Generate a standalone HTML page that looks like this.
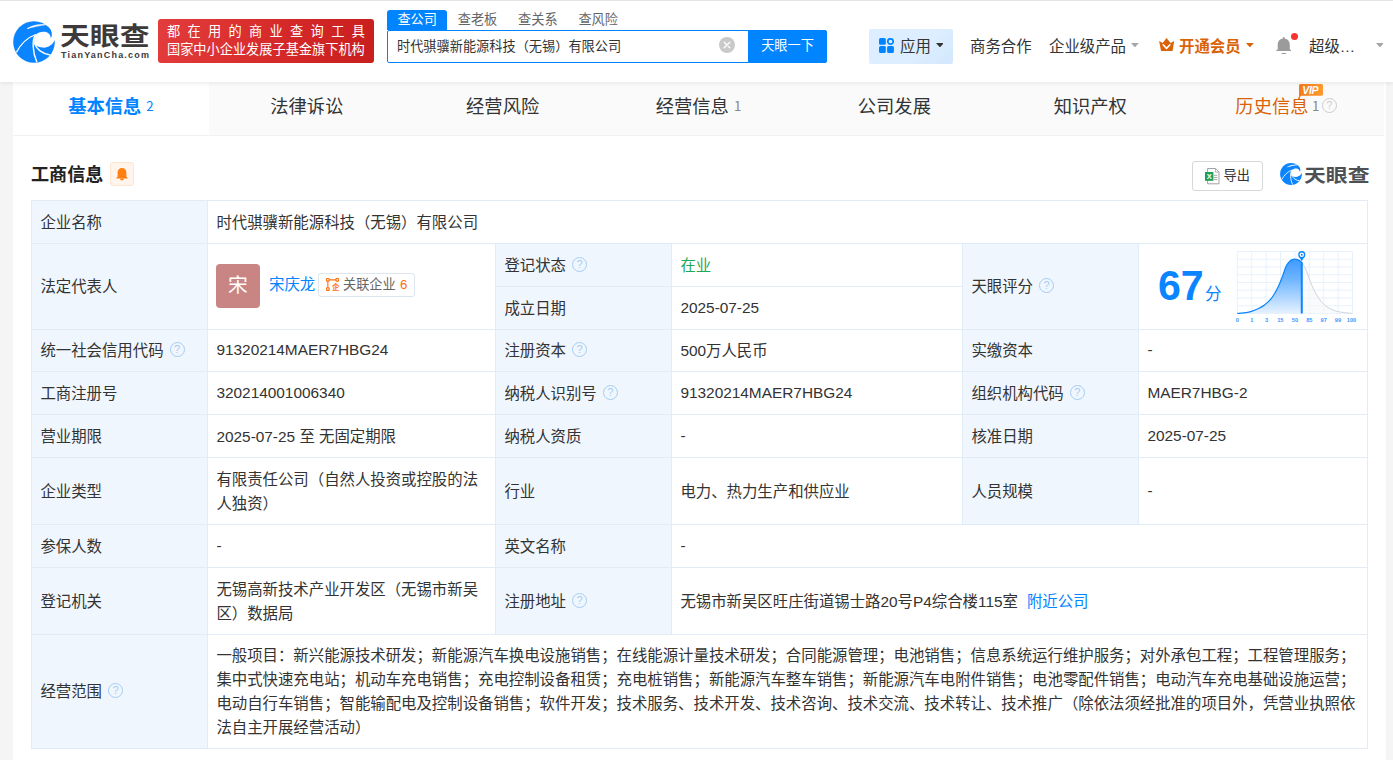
<!DOCTYPE html>
<html lang="zh-CN">
<head>
<meta charset="utf-8">
<title>天眼查</title>
<style>
*{box-sizing:border-box;margin:0;padding:0}
html,body{width:1393px;height:760px;overflow:hidden}
body{background:#f5f5f5;font-family:"Liberation Sans","Noto Sans CJK SC",sans-serif;font-size:15px;color:#333;position:relative}
a{text-decoration:none;color:#0084ff}
.abs{position:absolute;white-space:nowrap}
/* header */
#hd{position:absolute;left:0;top:0;width:1393px;height:82px;background:#fff;box-shadow:0 1px 5px rgba(0,0,0,.09);z-index:5}
#hd:before{content:'';position:absolute;left:0;top:0;width:100%;height:1px;background:#e2e4e2}
#logo-t{left:60px;top:18px;font-size:25.5px;line-height:36px;font-weight:bold;color:#3e3a39;transform-origin:0 50%;transform:scaleX(1.17);letter-spacing:0}
#logo-e{left:61px;top:49px;font-size:9px;line-height:12px;font-weight:bold;color:#3e3a39;letter-spacing:1.2px}
#ban{left:158px;top:19px;width:216px;height:44px;border-radius:3px;background:linear-gradient(100deg,#e33c3c 0%,#d62a2a 55%,#c91e1e 100%);color:#fff;font-size:13.2px}
#ban div{position:absolute;left:9px;white-space:nowrap;line-height:18px}
#st{left:387px;top:10px;height:20px;font-size:13.2px;line-height:19px;color:#666}
#st span{display:inline-block;padding:0 10.4px;height:20px}
#st span.on{background:#0084ff;color:#fff;border-radius:3px 3px 0 0}
#sb{left:387px;top:30px;width:440px;height:33px;border:1.5px solid #0084ff;border-radius:2px;background:#fff}
#sbt{left:397px;top:30px;line-height:33px;font-size:13.2px;color:#333}
#sbb{left:748px;top:30px;width:79px;height:33px;background:#0084ff;color:#fff;font-size:13.2px;line-height:32px;text-align:center;border-radius:0 3px 3px 0}
#clr{left:719px;top:37px;width:16px;height:16px}
#app{left:869px;top:29px;width:84px;height:35px;background:linear-gradient(135deg,#dceeff 0%,#dceeff 60%,#d3e8fd 100%);border-radius:2px}
.nav{font-size:15.4px;line-height:20px;top:37px;color:#333}
.car{width:0;height:0;border-left:3.8px solid transparent;border-right:3.8px solid transparent;border-top:4.2px solid #a3a6aa}

/* card */
#card{position:absolute;left:13px;top:82px;width:1373px;height:690px;background:#fff}
#tabs{position:absolute;left:0;top:0;width:1371px;height:54px;background:#fafafa;border-bottom:1px solid #f2f2f2}
.tab{position:absolute;top:0;width:195.86px;height:54px;line-height:50px;font-size:18.3px;color:#333;text-align:center;white-space:nowrap}
.tab.on{background:#fff;color:#0084ff;font-weight:bold;height:53px}
.tab small{font-family:"Noto Sans CJK SC",sans-serif;font-size:13.2px;color:#888;font-weight:normal;margin-left:5px;position:relative;top:-2px}
.tab.on small{color:#0084ff}
#sec{left:18px;top:80px;font-size:18.1px;line-height:26px;font-weight:bold;color:#222}
#bell{left:97px;top:80px;width:24px;height:24px;background:#fff5ec;border:1px solid #ffe6cf;border-radius:3px}
#exp{left:1179px;top:79px;width:71px;height:30px;border:1px solid #d8d8d8;border-radius:3px;background:#fff;font-size:13.2px;line-height:27px;color:#333}
#wm{left:1291px;top:81px;font-size:18.6px;line-height:26px;font-weight:bold;color:#4d5156;transform-origin:0 50%;transform:scaleX(1.175)}
/* table */
#tb{position:absolute;left:18px;top:118px;width:1337px;height:549px;border-right:1px solid #e1ecf6;border-bottom:1px solid #e1ecf6;font-size:15.4px;color:#333}
.c{position:absolute;border-left:1px solid #e1ecf6;border-top:1px solid #e1ecf6;padding:1px 0 0 8.4px;display:flex;align-items:center;line-height:23.9px}
.c.l{background:#f0f6fd}
.c>div{white-space:nowrap}
.n{position:relative;top:-1px}
.q{display:inline-block;width:15px;height:15px;border:1.2px solid #a6cdf2;border-radius:50%;color:#a6cdf2;font-size:11px;line-height:12.6px;text-align:center;vertical-align:3px;margin-left:6px;font-family:"Liberation Sans",sans-serif}
</style>
</head>
<body>
<div id="hd">
  <svg class="abs" style="left:13px;top:20.5px" width="42" height="42" viewBox="0 0 42 42">
    <circle cx="21" cy="21" r="20.8" fill="#0a84ff"/>
    <path d="M22.4,13.9 C25.2,11.2 29.5,10 33.2,11 C36.2,11.9 37.9,14.5 37.7,17.1 C38.9,15.5 39.5,12.4 37.8,8.8 L43,8 L43,19.3 L41.7,19.3 C39.6,24 34.5,27.2 29.6,26.6 C27.3,26.3 25.3,25.6 23.8,25.2 C22.2,23.6 21.4,22.6 21.2,21.6 C20.9,18.6 21.4,15.8 22.4,13.9 Z" fill="#fff"/>
    <path d="M22.8,13.5 C14.5,16.5 7.5,23.5 3.4,31.4" fill="none" stroke="#fff" stroke-width="1.3"/>
    <path d="M22.4,13.9 C19,19 19.4,31 23.9,41.2" fill="none" stroke="#fff" stroke-width="1.4"/>
    <path d="M21.3,21.6 C23,28 29.5,33 37.4,34" fill="none" stroke="#fff" stroke-width="1.4"/>
    <path d="M14,7.7 C19.5,4.2 27,2.9 32.6,3.8 C27,4.4 20,6 14,7.7 Z" fill="#fff" stroke="#fff" stroke-width=".6"/>
  </svg>
  <div class="abs" id="logo-t">天眼查</div>
  <div class="abs" id="logo-e">TianYanCha.com</div>
  <div class="abs" id="ban"><div style="top:4px;letter-spacing:7.33px">都在用的商业查询工具</div><div style="top:22px;letter-spacing:0">国家中小企业发展子基金旗下机构</div></div>
  <div class="abs" id="st"><span class="on">查公司</span><span>查老板</span><span>查关系</span><span>查风险</span></div>
  <div class="abs" id="sb"></div>
  <div class="abs" id="sbt">时代骐骥新能源科技（无锡）有限公司</div>
  <svg class="abs" id="clr" viewBox="0 0 16 16"><circle cx="8" cy="8" r="8" fill="#c9c9c9"/><path d="M5.2,5.2 L10.8,10.8 M10.8,5.2 L5.2,10.8" stroke="#fff" stroke-width="1.3" stroke-linecap="round"/></svg>
  <div class="abs" id="sbb">天眼一下</div>
  <div class="abs" id="app"></div>
  <svg class="abs" style="left:879px;top:38px" width="15" height="15" viewBox="0 0 15 15"><rect x="0" y="0" width="6.8" height="6.8" rx="1.5" fill="#0084ff"/><rect x="0" y="8.1" width="6.8" height="6.8" rx="1.5" fill="#0084ff"/><rect x="8.1" y="8.1" width="6.8" height="6.8" rx="1.5" fill="#0084ff"/><circle cx="11.5" cy="3.5" r="2.7" fill="none" stroke="#0084ff" stroke-width="1.7"/></svg>
  <div class="abs nav" style="left:900px">应用</div>
  <svg class="abs" style="left:935.5px;top:43px" width="7.8" height="4.4" viewBox="0 0 7.8 4.4"><path d="M0,0 L7.8,0 L3.9,4.4 Z" fill="#333"/></svg>
  <div class="abs nav" style="left:970px">商务合作</div>
  <div class="abs nav" style="left:1049px">企业级产品</div>
  <svg class="abs" style="left:1131.2px;top:43px" width="7.8" height="4.4" viewBox="0 0 7.8 4.4"><path d="M0,0 L7.8,0 L3.9,4.4 Z" fill="#a3a6aa"/></svg>
  <svg class="abs" style="left:1159px;top:38px" width="15.3" height="13.3" viewBox="0 0 15.3 13.3"><path d="M0.1,3 L3.6,5 L7.55,0 L11.6,5 L15.2,3 L13.5,13.2 L2.1,13.2 Z" fill="#db6307"/><path d="M4.2,6.8 L7.55,10.4 L10.9,6.8" fill="none" stroke="#fff" stroke-width="1.6" stroke-linecap="round" stroke-linejoin="round"/></svg>
  <div class="abs nav" style="left:1179px;color:#db6307;font-weight:bold">开通会员</div>
  <svg class="abs" style="left:1245.8px;top:43px" width="7.8" height="4.4" viewBox="0 0 7.8 4.4"><path d="M0,0 L7.8,0 L3.9,4.4 Z" fill="#db6307"/></svg>
  <svg class="abs" style="left:1275.5px;top:37px" width="15.5" height="17.5" viewBox="0 0 15.5 17.5"><path d="M7.75,0 C8.3,0 8.6,0.4 8.6,1.6 C11.8,2 13.8,4.6 13.8,8 L13.8,12.6 L15.4,13.4 L15.4,14.1 L0.1,14.1 L0.1,13.4 L1.7,12.6 L1.7,8 C1.7,4.6 3.7,2 6.9,1.6 C6.9,0.4 7.2,0 7.75,0 Z" fill="#9b9b9b"/><rect x="5.4" y="16.1" width="4.7" height="1" rx=".5" fill="#9b9b9b"/></svg>
  <div class="abs" style="left:1291px;top:33px;width:7px;height:7px;border-radius:50%;background:#f5342f"></div>
  <div class="abs nav" style="left:1309px">超级…</div>
  <svg class="abs" style="left:1375.6px;top:42.5px" width="7.8" height="4.4" viewBox="0 0 7.8 4.4"><path d="M0,0 L7.8,0 L3.9,4.4 Z" fill="#a3a6aa"/></svg>
</div>

<div id="card">
  <div id="tabs">
    <div class="tab on" style="left:0.00px">基本信息<small>2</small></div>
    <div class="tab" style="left:195.86px">法律诉讼</div>
    <div class="tab" style="left:391.72px">经营风险</div>
    <div class="tab" style="left:587.58px">经营信息<small>1</small></div>
    <div class="tab" style="left:783.44px">公司发展</div>
    <div class="tab" style="left:979.30px">知识产权</div>
    <div class="tab" style="left:1175.16px;color:#db6307">历史信息<small style="margin-left:3.5px">1</small><span class="q" style="border-color:#ccc;color:#ccc;margin-left:2.5px;vertical-align:4px">?</span></div>
    <svg class="abs" style="left:1286px;top:2px" width="24" height="14" viewBox="0 0 24 14"><defs><linearGradient id="vg" x1="0" y1="0" x2="1" y2="0"><stop offset="0" stop-color="#f47a18"/><stop offset="1" stop-color="#ff9b30"/></linearGradient></defs><path d="M1.5,0 L22.5,0 Q24,0 24,1.5 L24,10.3 Q24,11.8 22.5,11.8 L2.4,11.8 L0,13.6 L0,1.5 Q0,0 1.5,0 Z" fill="url(#vg)"/><text x="3.2" y="9.8" font-family="Liberation Sans,sans-serif" font-size="10.5" font-weight="bold" font-style="italic" fill="#fff" letter-spacing="-0.3">VIP</text></svg>
  </div>
  <div class="abs" id="sec">工商信息</div>
  <div class="abs" id="bell"><svg style="position:absolute;left:5px;top:5px" width="12" height="13" viewBox="0 0 12 13"><path d="M6,0 C8.6,0 10.4,2 10.4,4.8 L10.4,8.6 L11.6,9.8 L11.6,10.6 L0.4,10.6 L0.4,9.8 L1.6,8.6 L1.6,4.8 C1.6,2 3.4,0 6,0 Z" fill="#ff8010"/><path d="M4,10.6 L8,10.6 C8,11.8 7.1,12.6 6,12.6 C4.9,12.6 4,11.8 4,10.6 Z" fill="#ff8010"/></svg></div>
  <div class="abs" id="exp"><svg style="position:absolute;left:11.5px;top:6px" width="15" height="16.5" viewBox="0 0 15 16.5"><path d="M2.6,0.5 L10.6,0.5 L14,3.9 L14,15.8 L2.6,15.8 Z" fill="#fff" stroke="#a2a2a2" stroke-width="1"/><path d="M10.4,0.6 L10.4,4.1 L13.9,4.1" fill="none" stroke="#a2a2a2" stroke-width=".8"/><path d="M9,7.3 L12.4,7.3 M9,9.5 L12.4,9.5 M9,11.7 L12.4,11.7" stroke="#a2a2a2" stroke-width=".9"/><rect x="0" y="4" width="8.4" height="8.8" fill="#1e9f55"/><text x="4.2" y="11" text-anchor="middle" font-family="Liberation Sans,sans-serif" font-size="7.6" font-weight="bold" fill="#fff">X</text></svg><span style="margin-left:30.5px">导出</span></div>
  <svg class="abs" style="left:1267px;top:81px" width="22" height="22" viewBox="0 0 42 42">
    <circle cx="21" cy="21" r="20.8" fill="#0a84ff"/>
    <path d="M22.4,13.9 C25.2,11.2 29.5,10 33.2,11 C36.2,11.9 37.9,14.5 37.7,17.1 C38.9,15.5 39.5,12.4 37.8,8.8 L43,8 L43,19.3 L41.7,19.3 C39.6,24 34.5,27.2 29.6,26.6 C27.3,26.3 25.3,25.6 23.8,25.2 C22.2,23.6 21.4,22.6 21.2,21.6 C20.9,18.6 21.4,15.8 22.4,13.9 Z" fill="#fff"/>
    <path d="M22.8,13.5 C14.5,16.5 7.5,23.5 3.4,31.4" fill="none" stroke="#fff" stroke-width="1.6"/>
    <path d="M22.4,13.9 C19,19 19.4,31 23.9,41.2" fill="none" stroke="#fff" stroke-width="1.7"/>
    <path d="M21.3,21.6 C23,28 29.5,33 37.4,34" fill="none" stroke="#fff" stroke-width="1.7"/>
    <path d="M14,7.7 C19.5,4.2 27,2.9 32.6,3.8 C27,4.4 20,6 14,7.7 Z" fill="#fff" stroke="#fff" stroke-width=".6"/>
  </svg>
  <div class="abs" id="wm">天眼查</div>
  <div id="tb">
    <div class="c l" style="left:0px;top:0px;width:176px;height:43px"><div>企业名称</div></div>
    <div class="c" style="left:176px;top:0px;width:1160px;height:43px"><div>时代骐骥新能源科技（无锡）有限公司</div></div>
    <div class="c l" style="left:0px;top:43px;width:176px;height:86px"><div>法定代表人</div></div>
    <div class="c" style="left:176px;top:43px;width:288px;height:86px"><div><span class="abs" style="left:8px;top:20px;width:44px;height:44px;border-radius:4px;background:#c98584;color:#fff;font-size:19.8px;line-height:42px;text-align:center">宋</span><a class="abs" style="left:61px;top:29px;line-height:24px">宋庆龙</a><span class="abs" style="left:110px;top:29px;width:97px;height:24px;border:1px solid #dde5ee;border-radius:3px"></span><svg class="abs" style="left:118px;top:34px" width="13.2" height="13" viewBox="0 0 13.2 13"><g fill="none" stroke="#ff6d0a" stroke-width="1.1"><rect x=".55" y=".55" width="2.6" height="2.6" rx=".5"/><rect x="10" y=".55" width="2.6" height="2.6" rx=".5"/><rect x=".55" y="9.8" width="2.6" height="2.6" rx=".5"/><path d="M3.2,1.85 L10,1.85 M1.85,3.2 L1.85,9.8"/></g><text x="9.7" y="12.4" text-anchor="middle" font-family="Noto Sans CJK SC,sans-serif" font-size="7.6" font-weight="bold" fill="#ff6d0a">企</text></svg><span class="abs" style="left:135px;top:29px;line-height:24px;font-size:13.2px;color:#666">关联企业</span><span class="abs" style="left:192px;top:29px;line-height:24px;font-size:13.2px;color:#ff6d0a">6</span></div></div>
    <div class="c l" style="left:464px;top:43px;width:176px;height:43px"><div>登记状态<span class="q">?</span></div></div>
    <div class="c" style="left:640px;top:43px;width:291px;height:43px"><div><span style="color:#1fa755">在业</span></div></div>
    <div class="c l" style="left:464px;top:86px;width:176px;height:43px"><div>成立日期</div></div>
    <div class="c" style="left:640px;top:86px;width:291px;height:43px"><div><span class="n">2025-07-25</span></div></div>
    <div class="c l" style="left:931px;top:43px;width:176px;height:86px"><div>天眼评分<span class="q">?</span></div></div>
    <div class="c" style="left:1107px;top:43px;width:229px;height:86px"><div><span class="abs" style="left:19px;top:19px;font-size:43px;line-height:44px;font-weight:bold;color:#0a84ff;font-family:'Liberation Sans',sans-serif;transform-origin:0 50%;transform:scaleX(.955)">67</span><span class="abs" style="left:66px;top:39px;font-size:16.5px;line-height:22px;color:#0a84ff">分</span><svg class="abs" style="left:91px;top:2px" width="132" height="82" viewBox="0 0 132 82"><defs><linearGradient id="cg" x1="0" y1="0" x2="0" y2="1"><stop offset="0" stop-color="#3d9bff"/><stop offset=".35" stop-color="#6cb3ff"/><stop offset="1" stop-color="#e6f2ff"/></linearGradient></defs><path d="M7.34,5.40 L7.34,67.46 M21.74,5.40 L21.74,67.46 M36.14,5.40 L36.14,67.46 M50.53,5.40 L50.53,67.46 M64.93,5.40 L64.93,67.46 M79.33,5.40 L79.33,67.46 M93.73,5.40 L93.73,67.46 M108.13,5.40 L108.13,67.46 M122.53,5.40 L122.53,67.46 M7.34,5.40 L122.50,5.40 M7.34,13.16 L122.50,13.16 M7.34,20.92 L122.50,20.92 M7.34,28.68 L122.50,28.68 M7.34,36.44 L122.50,36.44 M7.34,44.20 L122.50,44.20 M7.34,51.96 L122.50,51.96 M7.34,59.72 L122.50,59.72 M7.34,67.48 L122.50,67.48" fill="none" stroke="#e7f1fc" stroke-width="1"/><path d="M71.78,16.41 C72.41,17.49 74.38,20.40 75.55,22.88 C76.72,25.36 77.71,28.49 78.79,31.30 C79.87,34.11 80.77,36.84 82.03,39.72 C83.29,42.60 84.73,45.84 86.35,48.57 C87.97,51.30 89.94,54.06 91.74,56.13 C93.54,58.19 95.16,59.63 97.14,60.98 C99.12,62.33 101.46,63.37 103.62,64.22 C105.77,65.07 106.94,65.52 110.09,66.06 C113.24,66.59 120.44,67.22 122.50,67.46 L122.50,67.46 L71.78,67.46 Z" fill="#f7f8fa" fill-opacity=".75"/><path d="M71.78,16.41 C72.41,17.49 74.38,20.40 75.55,22.88 C76.72,25.36 77.71,28.49 78.79,31.30 C79.87,34.11 80.77,36.84 82.03,39.72 C83.29,42.60 84.73,45.84 86.35,48.57 C87.97,51.30 89.94,54.06 91.74,56.13 C93.54,58.19 95.16,59.63 97.14,60.98 C99.12,62.33 101.46,63.37 103.62,64.22 C105.77,65.07 106.94,65.52 110.09,66.06 C113.24,66.59 120.44,67.22 122.50,67.46" fill="none" stroke="#c9cfd9" stroke-width=".9"/><path d="M7.34,67.46 C8.81,67.33 13.82,67.04 16.19,66.70 C18.56,66.36 19.61,66.06 21.59,65.41 C23.57,64.76 25.90,63.90 28.06,62.82 C30.22,61.74 32.38,60.59 34.54,58.93 C36.70,57.28 39.22,54.97 41.01,52.89 C42.81,50.80 44.07,48.57 45.33,46.41 C46.59,44.25 47.58,42.09 48.57,39.94 C49.56,37.78 50.42,35.62 51.27,33.46 C52.11,31.30 52.83,29.18 53.64,26.98 C54.45,24.79 55.21,22.14 56.13,20.29 C57.04,18.44 58.10,16.98 59.15,15.87 C60.19,14.75 61.45,14.05 62.39,13.60 C63.32,13.15 63.91,13.17 64.76,13.17 C65.61,13.17 66.56,13.28 67.46,13.60 C68.36,13.92 69.44,14.64 70.16,15.11 C70.88,15.58 71.51,16.19 71.78,16.41 L71.78,67.46 L7.34,67.46 Z" fill="url(#cg)"/><path d="M7.34,67.46 C8.81,67.33 13.82,67.04 16.19,66.70 C18.56,66.36 19.61,66.06 21.59,65.41 C23.57,64.76 25.90,63.90 28.06,62.82 C30.22,61.74 32.38,60.59 34.54,58.93 C36.70,57.28 39.22,54.97 41.01,52.89 C42.81,50.80 44.07,48.57 45.33,46.41 C46.59,44.25 47.58,42.09 48.57,39.94 C49.56,37.78 50.42,35.62 51.27,33.46 C52.11,31.30 52.83,29.18 53.64,26.98 C54.45,24.79 55.21,22.14 56.13,20.29 C57.04,18.44 58.10,16.98 59.15,15.87 C60.19,14.75 61.45,14.05 62.39,13.60 C63.32,13.15 63.91,13.17 64.76,13.17 C65.61,13.17 66.56,13.28 67.46,13.60 C68.36,13.92 69.44,14.64 70.16,15.11 C70.88,15.58 71.51,16.19 71.78,16.41" fill="none" stroke="#0a84ff" stroke-width="1.2"/><path d="M71.78,16.19 L71.78,67.46" stroke="#0a84ff" stroke-width="2"/><path d="M69.18,10.83 L74.38,10.83 L71.78,15.33 Z" fill="#0a84ff"/><circle cx="71.78" cy="8.63" r="2.9" fill="#fff" stroke="#0a84ff" stroke-width="1.3"/><circle cx="71.78" cy="8.63" r="1" fill="#0a84ff"/><g font-family="Liberation Sans,sans-serif" font-size="5.7" font-weight="bold" fill="#3a9bff" text-anchor="middle"><text x="7.34" y="75.88">0</text><text x="21.91" y="75.88">1</text><text x="36.48" y="75.88">3</text><text x="50.30" y="75.88">15</text><text x="64.98" y="75.88">50</text><text x="79.33" y="75.88">85</text><text x="93.69" y="75.88">97</text><text x="107.93" y="75.88">99</text><text x="121.53" y="75.88">100</text></g></svg></div></div>
    <div class="c l" style="left:0px;top:129px;width:176px;height:42px"><div>统一社会信用代码<span class="q">?</span></div></div>
    <div class="c" style="left:176px;top:129px;width:288px;height:42px"><div><span class="n">91320214MAER7HBG24</span></div></div>
    <div class="c l" style="left:464px;top:129px;width:176px;height:42px"><div>注册资本<span class="q">?</span></div></div>
    <div class="c" style="left:640px;top:129px;width:291px;height:42px"><div>500万人民币</div></div>
    <div class="c l" style="left:931px;top:129px;width:176px;height:42px"><div>实缴资本</div></div>
    <div class="c" style="left:1107px;top:129px;width:229px;height:42px"><div><span class="n">-</span></div></div>
    <div class="c l" style="left:0px;top:171px;width:176px;height:43px"><div>工商注册号</div></div>
    <div class="c" style="left:176px;top:171px;width:288px;height:43px"><div><span class="n">320214001006340</span></div></div>
    <div class="c l" style="left:464px;top:171px;width:176px;height:43px"><div>纳税人识别号<span class="q">?</span></div></div>
    <div class="c" style="left:640px;top:171px;width:291px;height:43px"><div><span class="n">91320214MAER7HBG24</span></div></div>
    <div class="c l" style="left:931px;top:171px;width:176px;height:43px"><div>组织机构代码<span class="q">?</span></div></div>
    <div class="c" style="left:1107px;top:171px;width:229px;height:43px"><div><span class="n">MAER7HBG-2</span></div></div>
    <div class="c l" style="left:0px;top:214px;width:176px;height:43px"><div>营业期限</div></div>
    <div class="c" style="left:176px;top:214px;width:288px;height:43px"><div>2025-07-25 至 无固定期限</div></div>
    <div class="c l" style="left:464px;top:214px;width:176px;height:43px"><div>纳税人资质</div></div>
    <div class="c" style="left:640px;top:214px;width:291px;height:43px"><div><span class="n">-</span></div></div>
    <div class="c l" style="left:931px;top:214px;width:176px;height:43px"><div>核准日期</div></div>
    <div class="c" style="left:1107px;top:214px;width:229px;height:43px"><div><span class="n">2025-07-25</span></div></div>
    <div class="c l" style="left:0px;top:257px;width:176px;height:67px"><div>企业类型</div></div>
    <div class="c" style="left:176px;top:257px;width:288px;height:67px"><div>有限责任公司（自然人投资或控股的法<br>人独资）</div></div>
    <div class="c l" style="left:464px;top:257px;width:176px;height:67px"><div>行业</div></div>
    <div class="c" style="left:640px;top:257px;width:291px;height:67px"><div>电力、热力生产和供应业</div></div>
    <div class="c l" style="left:931px;top:257px;width:176px;height:67px"><div>人员规模</div></div>
    <div class="c" style="left:1107px;top:257px;width:229px;height:67px"><div><span class="n">-</span></div></div>
    <div class="c l" style="left:0px;top:324px;width:176px;height:43px"><div>参保人数</div></div>
    <div class="c" style="left:176px;top:324px;width:288px;height:43px"><div><span class="n">-</span></div></div>
    <div class="c l" style="left:464px;top:324px;width:176px;height:43px"><div>英文名称</div></div>
    <div class="c" style="left:640px;top:324px;width:696px;height:43px"><div><span class="n">-</span></div></div>
    <div class="c l" style="left:0px;top:367px;width:176px;height:67px"><div>登记机关</div></div>
    <div class="c" style="left:176px;top:367px;width:288px;height:67px"><div>无锡高新技术产业开发区（无锡市新吴<br>区）数据局</div></div>
    <div class="c l" style="left:464px;top:367px;width:176px;height:67px"><div>注册地址<span class="q">?</span></div></div>
    <div class="c" style="left:640px;top:367px;width:696px;height:67px"><div>无锡市新吴区旺庄街道锡士路20号P4综合楼115室<a style="margin-left:9px">附近公司</a></div></div>
    <div class="c l" style="left:0px;top:434px;width:176px;height:114px"><div>经营范围<span class="q">?</span></div></div>
    <div class="c" style="left:176px;top:434px;width:1160px;height:114px"><div>一般项目：新兴能源技术研发；新能源汽车换电设施销售；在线能源计量技术研发；合同能源管理；电池销售；信息系统运行维护服务；对外承包工程；工程管理服务；<br>集中式快速充电站；机动车充电销售；充电控制设备租赁；充电桩销售；新能源汽车整车销售；新能源汽车电附件销售；电池零配件销售；电动汽车充电基础设施运营；<br>电动自行车销售；智能输配电及控制设备销售；软件开发；技术服务、技术开发、技术咨询、技术交流、技术转让、技术推广（除依法须经批准的项目外，凭营业执照依<br>法自主开展经营活动）</div></div>
  </div>
</div>
</body>
</html>
